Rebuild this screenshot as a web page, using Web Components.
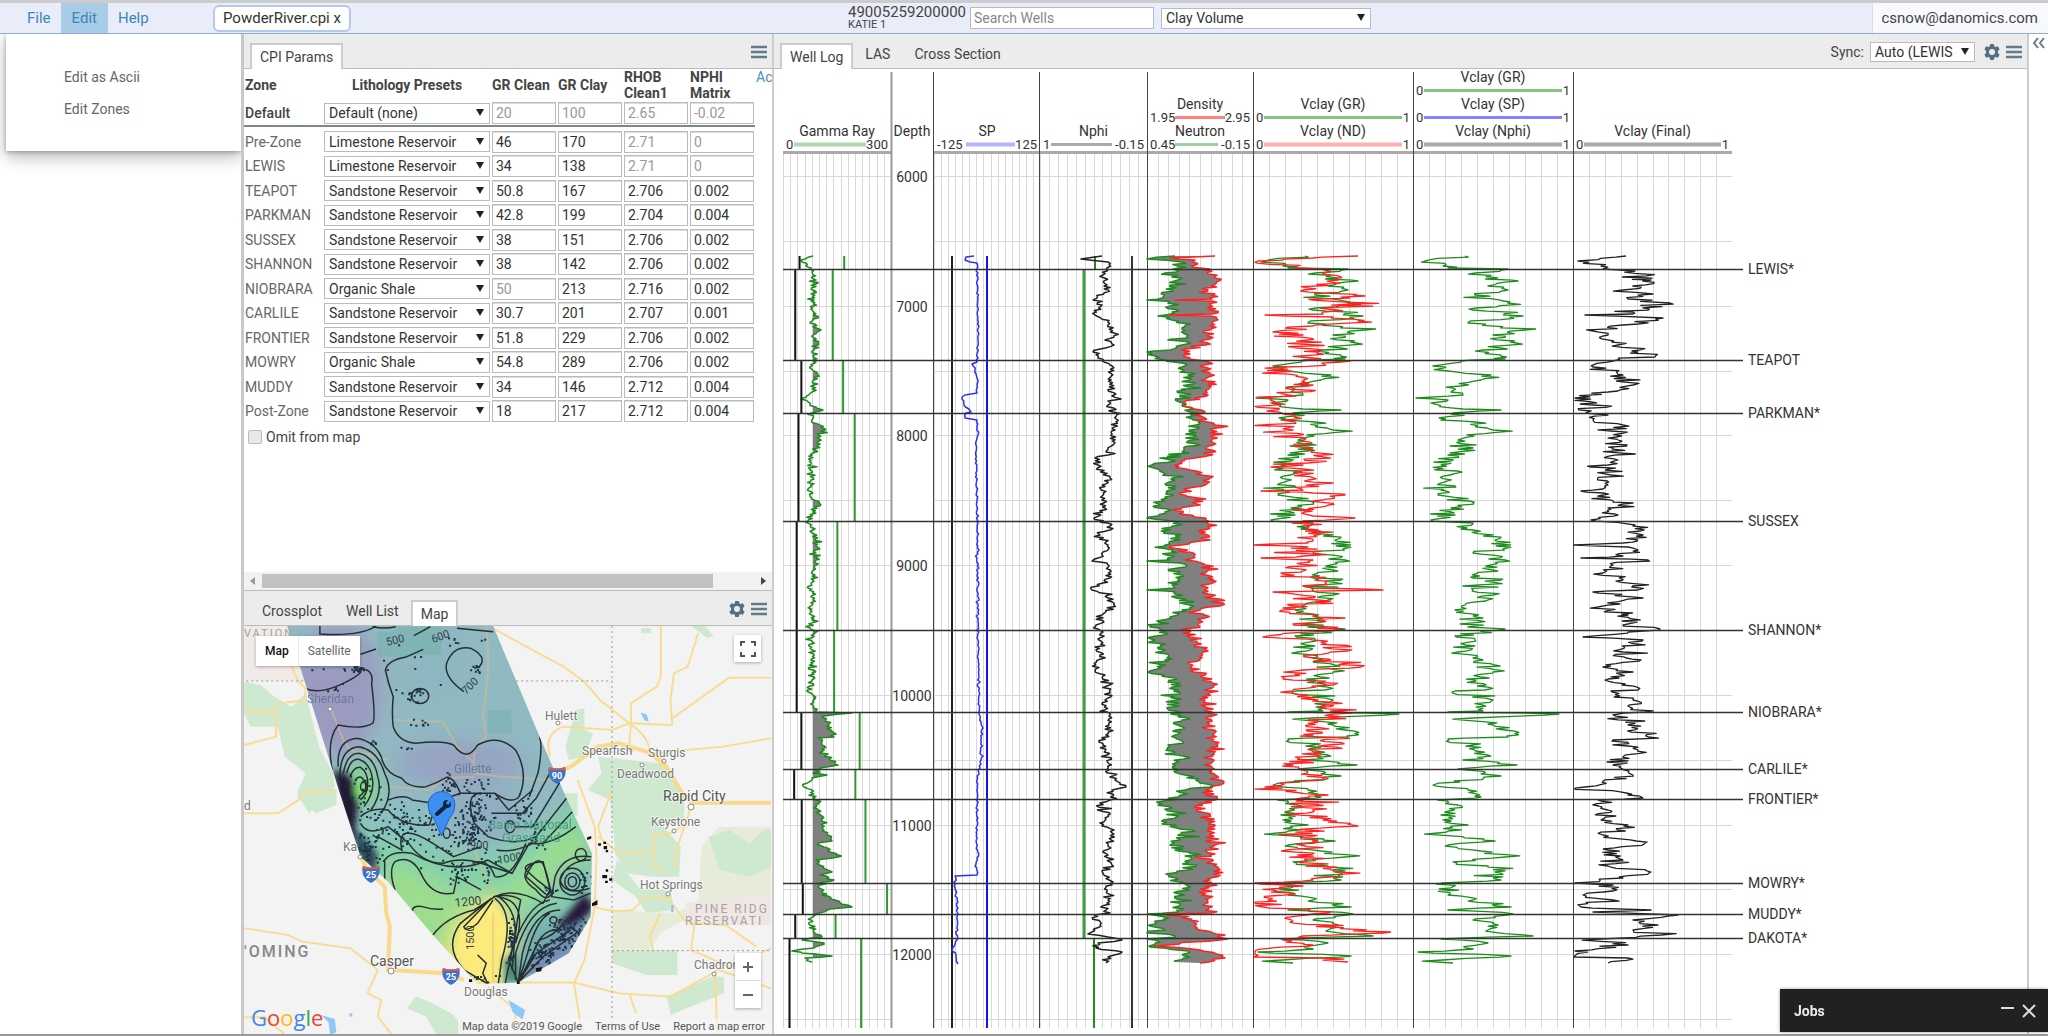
<!DOCTYPE html>
<html lang="en">
<head>
<meta charset="utf-8">
<title>PowderRiver.cpi</title>
<style>
html, body { margin: 0; height: 100%; }
body { font: 14px/16px Roboto, "Liberation Sans", sans-serif; color: #444; background: #fff; overflow: hidden; }
</style>
</head>
<body>
<cpi-app></cpi-app>
<script>
function define(name, html, setup) {
  const template = document.createElement('template');
  template.innerHTML = html;
  customElements.define(name, class extends HTMLElement {
    connectedCallback() {
      if (this.shadowRoot) return;
      this.attachShadow({ mode: 'open' }).append(template.content.cloneNode(true));
      if (setup) setup(this.shadowRoot, this);
    }
  });
}

/* ---------- small shared pieces ---------- */
define('drop-down', `
<style>
:host { display: block; position: relative; min-width: 0; }
:host::after { content: ""; position: absolute; right: 6px; top: 50%; margin-top: -4px; border: 4px solid transparent; border-top: 7px solid #222; border-bottom: 0; pointer-events: none; }
select { appearance: none; display: block; width: 100%; height: var(--h, 21px); box-sizing: border-box; margin: 0; border: 1px solid #bbb; border-radius: 0; background: #fff; color: #333; font: inherit; padding: 0 16px 0 4px; overflow: hidden; }
</style><select><option></option></select>`, (root, el) => {
  root.querySelector('option').textContent = el.getAttribute('value');
  root.querySelector('select').setAttribute('aria-label', el.getAttribute('label'));
});

define('icon-button', `
<style>
:host { display: block; }
button { display: block; border: 0; padding: 0; background: none; }
svg { display: block; }
</style><button><svg width="18" height="18" viewBox="0 0 18 18"></svg></button>`, (root, el) => {
  const shapes = {
    menu: '<path d="M1 4h16M1 9h16M1 14h16" stroke="#647c8a" stroke-width="2.500"/>',
    gear: '<path fill="#566f80" fill-rule="evenodd" d="M7.2 1h3.6l.5 2.3 1.3.7 2.2-.8 1.8 3.1-1.7 1.6v2.2l1.7 1.6-1.8 3.1-2.2-.8-1.3.7-.5 2.3H7.200l-.5-2.300-1.300-.700-2.200.800-1.800-3.100 1.700-1.600V7.900L1.400 6.300l1.800-3.100 2.200.8 1.300-.7zM9 6a3 3 0 1 0 0 6a3 3 0 1 0 0-6z"/>',
    collapse: '<path fill="none" stroke="#647c8a" stroke-width="2" d="M8 4L4 9l4 5M14 4l-4 5 4 5"/>'
  };
  root.querySelector('svg').innerHTML = shapes[el.getAttribute('icon')];
  root.querySelector('button').setAttribute('aria-label', el.getAttribute('icon'));
});

define('tab-strip', `
<style>
:host { display: flex; align-items: flex-end; box-sizing: border-box; height: 35px; padding: 0 4px 0 6px; background: #ececec; border-bottom: 1px solid #bbb; flex: none; }
nav { display: flex; flex: 1; align-items: flex-end; height: 100%; }
button { font: inherit; color: #444; background: none; border: 0; height: 28px; padding: 0 12px; margin: 0; white-space: nowrap; }
button[aria-selected=true] { background: #fff; border: 2px solid #ccc; border-bottom: 0; height: 26px; padding: 0 8px; margin-bottom: -1px; }
div { display: flex; align-items: center; height: 32px; gap: 4px; }
:host([tools-low]) div { height: 32px; }
</style><nav role="tablist"></nav><div><slot></slot></div>`, (root, el) => {
  el.getAttribute('tabs').split('|').forEach(name => {
    const b = document.createElement('button');
    b.textContent = name;
    b.setAttribute('role', 'tab');
    b.setAttribute('aria-selected', name === el.getAttribute('active'));
    root.querySelector('nav').append(b);
  });
});

/* ---------- top bar ---------- */
define('app-header', `
<style>
:host { display: flex; align-items: center; box-sizing: border-box; height: 34px; flex: none; border-top: 3px solid #ccc; border-bottom: 1px solid #8dabe0; background: #e9edf9; }
.left { flex: 0 0 848px; display: flex; align-items: center; height: 100%; }
nav { display: flex; height: 100%; padding-left: 17px; width: 196px; box-sizing: border-box; }
nav button { font: inherit; font-size: 15px; color: #3a87b7; border: 0; background: none; padding: 0 10px; height: 100%; }
nav button.on { background: #a8cbe6; padding: 0 11px; }
.file { font: inherit; font-size: 15px; color: #333; background: #fff; border: 2px solid #b5c9ef; border-radius: 6px; height: 27px; padding: 0 8px; margin-left: 17px; white-space: nowrap; }
.well { width: 122px; line-height: 14px; }
.well b { display: block; font-weight: 400; font-size: 15px; }
.well span { font-size: 11px; line-height: 12px; display: block; }
input { width: 184px; height: 22px; box-sizing: border-box; border: 1px solid #bbb; font: inherit; padding: 0 3px; }
input::placeholder { color: #888; opacity: 1; }
drop-down { width: 210px; margin-left: 7px; }
a { margin-left: auto; background: #f7f9fd; border-left: 1px solid #ddd; height: 100%; padding: 0 10px 0 8px; line-height: 30px; color: #444; text-decoration: none; font-size: 15px; }
</style>
<div class="left"><nav><button>File</button><button class="on">Edit</button><button>Help</button></nav><button class="file">PowderRiver.cpi x</button></div>
<div class="well"><b>49005259200000</b><span>KATIE 1</span></div>
<input placeholder="Search Wells" aria-label="Search Wells">
<drop-down value="Clay Volume" label="Module"></drop-down>
<a href="#account">csnow@danomics.com</a>`);

define('side-menu', `
<style>
:host { display: block; flex: 0 0 244px; box-sizing: border-box; border-right: 3px solid #c8c8c8; background: #fff; position: relative; }
ul { position: absolute; left: 6px; right: 0; top: 0; margin: 0; padding: 27px 0 26px; list-style: none; background: #fff; box-shadow: 0 6px 16px rgba(0,0,0,.28), 0 1px 4px rgba(0,0,0,.3); clip-path: inset(0 0 -30px -10px); }
a { display: block; padding: 8px 58px; color: #666; text-decoration: none; }
</style>
<ul><li><a href="#ascii">Edit as Ascii</a></li><li><a href="#zones">Edit Zones</a></li></ul>`);

/* ---------- parameters ---------- */
define('cpi-params', `
<style>
:host { display: flex; flex-direction: column; flex: 1; min-height: 0; overflow: hidden; background: #fff; }
.body { flex: 1; min-height: 0; overflow: hidden; }
table { border-collapse: collapse; table-layout: fixed; width: 575px; }
th, td { padding: 0 1px; text-align: left; font-weight: 400; white-space: nowrap; }
th { font-weight: 700; }
th:nth-child(1) { width: 77px; } th:nth-child(2) { width: 166px; } .n { width: 64px; }
thead tr { height: 32px; }
thead th:nth-child(2) { text-align: center; }
thead th:nth-child(5), thead th:nth-child(6) { white-space: normal; }
.more { vertical-align: top; font-weight: 400; }
.more a { color: #4a90c0; text-decoration: none; display: block; }
tbody th { font-weight: 400; color: #666; }
tbody tr:nth-child(odd) { height: 25px; } tbody tr:nth-child(even) { height: 24px; }
tbody.def th { color: #444; font-weight: 500; }
tbody.def tr { height: 24px; }
tr.rule, tbody.def tr.rule { height: 4px; line-height: 2px; }
tr.rule td { padding: 0; } tr.rule hr { border: 0; border-top: 2px solid #7c888c; margin: 0 0 2px; }
input.v { display: block; width: 100%; height: 22px; box-sizing: border-box; border: 1px solid #bbb; box-shadow: inset 0 1px #ddd; font: inherit; color: #333; padding: 0 3px; margin: 0; }
input.v.dim { color: #999; }
label { display: flex; align-items: center; gap: 4px; padding: 6px 4px; }
label input { margin: 0; width: 14px; height: 14px; appearance: none; border: 1px solid #bbb; border-radius: 2px; background: #e8e8e8; }
.bar { display: flex; align-items: center; justify-content: space-between; height: 18px; background: #f1f1f1; padding: 0 6px; flex: none; }
.bar i { border: 4px solid transparent; border-right: 5px solid #999; border-left: 0; }
.bar i:last-child { border: 4px solid transparent; border-left: 5px solid #444; border-right: 0; }
.bar span { height: 14px; background: #c1c1c1; flex: 1; margin: 0 48px 0 7px; }
</style>
<tab-strip tabs="CPI Params" active="CPI Params"><icon-button icon="menu"></icon-button></tab-strip>
<div class="body"><table>
<thead><tr><th>Zone</th><th>Lithology Presets</th><th class="n">GR Clean</th><th class="n">GR Clay</th><th class="n">RHOB Clean1</th><th class="n">NPHI Matrix</th><th class="more"><a href="#add">Ac</a></th></tr></thead>
<tbody class="def"></tbody><tbody class="zones"></tbody></table>
<label><input type="checkbox">Omit from map</label></div>
<div class="bar"><i></i><span></span><i></i></div>`, root => {
  const L = 'Limestone Reservoir', S = 'Sandstone Reservoir', O = 'Organic Shale';
  const row = ([zone, preset, ...values]) => `<tr><th scope="row">${zone}</th><td><drop-down value="${preset}" label="${zone} preset"></drop-down></td>` +
    values.map(v => `<td><input class="v${v[0] === '~' ? ' dim' : ''}" aria-label="${zone}" value="${v.replace('~', '')}"></td>`).join('') + '</tr>';
  root.querySelector('.def').innerHTML = row(['Default', 'Default (none)', '~20', '~100', '~2.65', '~-0.02']) + '<tr class="rule"><td colspan="6"><hr></td></tr>';
  root.querySelector('.zones').innerHTML = [
    ['Pre-Zone', L, '46', '170', '~2.71', '~0'], ['LEWIS', L, '34', '138', '~2.71', '~0'],
    ['TEAPOT', S, '50.8', '167', '2.706', '0.002'], ['PARKMAN', S, '42.8', '199', '2.704', '0.004'],
    ['SUSSEX', S, '38', '151', '2.706', '0.002'], ['SHANNON', S, '38', '142', '2.706', '0.002'],
    ['NIOBRARA', O, '~50', '213', '2.716', '0.002'], ['CARLILE', S, '30.7', '201', '2.707', '0.001'],
    ['FRONTIER', S, '51.8', '229', '2.706', '0.002'], ['MOWRY', O, '54.8', '289', '2.706', '0.002'],
    ['MUDDY', S, '34', '146', '2.712', '0.004'], ['Post-Zone', S, '18', '217', '2.712', '0.004']
  ].map(row).join('');
});

/* deterministic noise, so the drawing is stable between loads */
function noise(seed) {
  return () => { seed = (seed * 1664525 + 1013904223) >>> 0; return seed / 4294967296 * 2 - 1; };
}

/* ---------- map ---------- */
define('area-map', `
<style>
:host { display: block; position: relative; flex: 1; min-height: 0; overflow: hidden; background: #f3f3f3; }
.map { display: block; position: absolute; left: 0; top: 0; }
.box { position: absolute; background: #fff; box-shadow: 0 1px 3px rgba(0,0,0,.3); display: flex; }
.box button { border: 0; background: none; font: inherit; font-size: 12px; color: #666; padding: 0 8px; }
.types { left: 12px; top: 10px; height: 30px; } .types button:first-child { color: #111; font-weight: 500; border-right: 1px solid #e6e6e6; } .types button { padding: 0 9px; }
.full { right: 11px; top: 9px; width: 27px; height: 27px; }
.zoom { right: 11px; bottom: 26px; width: 26px; height: 55px; flex-direction: column; }
.zoom button, .full button { flex: 1; padding: 0; display: grid; place-items: center; }
.zoom button:first-child { border-bottom: 1px solid #ddd; }
footer { position: absolute; right: 0; bottom: 0; display: flex; gap: 13px; padding: 0 7px 0 4px; font-size: 11px; line-height: 15px; background: rgba(245,245,245,.75); color: #555; }
footer a { color: #555; text-decoration: none; }
.logo { position: absolute; left: 7px; bottom: 4px; font: 500 22px/26px "Open Sans", sans-serif; }
</style>
<svg class="map" width="527" height="409" viewBox="244 626 527 409">
<defs>
<clipPath id="field"><path d="M137 198H735L870 530L948 715L1022 880L1018 1070L955 1180L808 1268L690 1272L560 1125L430 965L350 890L290 700Z"/></clipPath>
<filter id="b" x="-50%" y="-50%" width="200%" height="200%"><feGaussianBlur stdDeviation="30"/></filter>
<filter id="s" x="-50%" y="-50%" width="200%" height="200%"><feGaussianBlur stdDeviation="10"/></filter>
</defs>
<g transform="translate(240 560) scale(.3444 .3333)" fill="none" id="g">
<g fill="#cfe8d0">
<path d="M12 365L60 375L100 410L150 440L190 400L230 560L270 640L275 680L200 760L165 700L190 640L130 590L110 500L30 500L12 460Z"/>
<path d="M975 450L1000 445L1000 510L1025 520L1000 590L955 600L945 560Z"/><path d="M1165 205h28v15h-28zM1310 198h40l25 30-20 5z"/>
<path d="M1040 590L1220 610L1290 700L1290 780L1230 800L1280 860L1275 950L1200 950L1120 940L1090 880L1075 720L1010 690L1050 640Z"/><path d="M1095 900L1160 985L1250 990L1260 1050L1180 1060L1150 1010L1080 960Z"/>
<path d="M165 710L280 690V735L220 760Z"/><path d="M1080 1170H1270V1245H1180L1080 1210Z"/><path d="M1240 1310L1370 1250L1405 1250V1300L1250 1365Z"/>
<path d="M510 1310L560 1330L620 1365L660 1423H570L540 1370L485 1345Z"/><path d="M940 700h40v70l-40-20z"/></g>
<path fill="#e7ecd8" d="M1080 1050L1260 1060L1330 1030L1340 860L1390 800H1542V1050L1280 1085L1220 1120L1190 1172H1080Z"/>
<path fill="#f0e6e4" d="M1290 1030L1542 1000V1095H1310Z"/><path fill="#f1ebe8" d="M12 198H137L190 363H12Z"/>
<path fill="#cfe8d0" d="M1360 830l60-20 60 40 40-40h22v110l-60 30-90-20z"/>
<g stroke="#f9dc94" stroke-width="2">
<path d="M735 205L840 265L940 320L1000 365L1045 420L1130 490L1255 495L1250 420L1260 340L1300 320L1330 220"/>
<path d="M1222 198V350L1210 380L1135 430V490L1130 560M1255 475L1420 353H1542"/><path d="M900 590Q880 520 940 500L1080 510L1130 490Q1190 530 1190 580L1250 640L1290 710L1310 730H1542M1190 580L1400 560L1542 535"/>
<path d="M150 315Q160 360 190 385L190 420L120 430L90 460L30 455L12 440M105 455V530L12 555M275 500L260 470M280 540L310 610M12 760H110L170 720L180 700L280 690"/>
<path d="M1040 830L1100 880L1200 875V830L1250 820L1280 800M1200 880L1205 920L1240 940M1310 740L1270 860L1260 920M1030 800L1035 890L1030 1040L1000 1200L970 1270L990 1400L1000 1423M1030 1040Q1080 1060 1140 1050L1180 1010H1240L1290 1080L1320 1090L1310 1170L1420 1220L1542 1165M1310 1090L1410 1095L1500 1160M1220 1060L1190 1130L1200 1170M980 660L1030 800M1080 690L1040 800L1050 840"/>
<path d="M12 1105L140 1125L180 1145L320 1165L400 1230L370 1300L410 1320L400 1370L440 1423M12 1372H70L130 1423"/><path d="M808 1268H970L1100 1300L1250 1310L1390 1230L1542 1285M1380 1230L1385 1423M1130 1300L1150 1360M720 1280L800 1350V1423"/></g>
<path d="M1290 710L1250 640L1225 600L1180 575L1100 550L1040 560L1000 590L960 620L870 655M1310 728H1542M350 890L370 930L420 980L425 1060L435 1100L430 1230L600 1240L650 1260" stroke="#f9d98a" stroke-width="4"/>
<path d="M18 363H1080M1080 198V1423M1080 1172H1542" stroke="#999" stroke-dasharray="2 3"/>
<g fill="#8ec8f4"><path d="M1163 458l18 5 6 22-12-4zM780 1320l48 30-8 28-28-20zM235 1365l40 12 5 40-18 8-5-38zM318 1360h8v10h-8zM1252 1035h7v22h-7z"/></g>
<g clip-path="url(#field)" id="surface">
<rect x="100" y="190" width="950" height="1100" fill="#8cb6bf"/>
<g filter="url(#b)">
<ellipse cx="280" cy="390" rx="130" ry="200" fill="#9695bd"/><ellipse cx="640" cy="610" rx="190" ry="70" fill="#929fc0"/><ellipse cx="560" cy="300" rx="110" ry="130" fill="#87b4bd"/>
<path d="M280 780L560 860L700 880L850 830L1040 640V1060L800 1300L600 1300L330 950Z" fill="#7fcea6"/><ellipse cx="480" cy="790" rx="140" ry="50" fill="#84bdbd"/><ellipse cx="700" cy="760" rx="120" ry="70" fill="#8ba8bf"/>
<path d="M430 900L650 1000L760 1000L900 840L1000 790L1010 900L890 1000L790 1050L740 1290H600L420 1000Z" fill="#97dc88"/>
<path d="M730 1010L800 1100L750 1290H670L600 1180L630 1090Z" fill="#fdea70"/><ellipse cx="350" cy="680" rx="55" ry="65" fill="#80d584"/>
<path d="M820 1100L1020 1030V1180L800 1290Z" fill="#6da4aa"/><ellipse cx="965" cy="960" rx="40" ry="40" fill="#75a7ba"/></g>
<g filter="url(#s)"><path d="M730 1010L785 1100L745 1280H690L630 1180L640 1100Z" fill="#fcea74"/><path d="M270 630L310 640L345 690L340 760L330 850L290 760Z" fill="#160c28"/><path d="M330 800L400 880L390 950L340 880Z" fill="#243b50"/>
<path d="M1000 1000L1030 1040L960 1120L920 1100Z" fill="#1e1030"/><ellipse cx="355" cy="690" rx="22" ry="30" fill="#7be070"/><path d="M955 1100L1010 1080L950 1180L850 1250L820 1230Z" fill="#6f86b0"/><path d="M760 1200L800 1180L820 1260L770 1270Z" fill="#3f8573"/></g>
<path d="M400 215h110v75h-110zM450 200h135v85h-135zM720 450h68v70h-68z" fill="#5aa894" opacity=".3"/>
<path d="M715 198Q730 330 705 460L715 530L680 570V640L760 650L900 660M265 450L300 540L320 570L430 600M440 480L590 485L630 560L680 610M430 680L550 690L600 655L680 650M735 1000L700 920L670 840M735 1270V1060" stroke="#d9bd7c" stroke-width="2" opacity=".5"/>
<g stroke="#1b2429" stroke-width="1.5" id="contours">
<path d="M232 198V222Q350 230 395 198M385 200Q420 208 452 200M505 227L553 200M630 205L735 215M190 385Q230 405 300 370T345 325M350 283L395 267M350 325Q390 330 382 370Q395 480 385 490Q350 510 285 495Q250 540 268 630M532 268L480 292Q430 300 422 330Q430 370 445 410Q440 460 445 500Q460 545 510 550Q590 540 620 555Q660 610 690 555Q750 520 800 570Q840 640 810 710Q790 735 740 700L640 700Q620 650 600 652Q570 670 540 680Q490 685 470 655Q420 640 410 590Q390 545 340 535Q280 540 285 620"/>
<path d="M650 395Q590 350 600 310Q620 255 670 265Q720 290 695 320L680 325M498 408a22 20 0 1 0 50 0a22 20 0 1 0 -50 0M510 400l20-15M870 530Q880 560 865 640L840 710M905 630L860 715L820 760L730 760M948 715L860 830Q800 860 720 830L680 790Q650 700 700 700M930 665L850 800L800 800M965 755L880 850M975 800Q900 860 840 850L790 940L700 910Q640 890 590 910Q530 910 490 850L430 800Q370 830 350 790"/>
<path d="M290 650Q290 565 345 560Q400 570 420 640Q450 700 410 760M300 640Q310 580 345 580Q390 590 400 650Q415 700 380 750M310 640Q320 595 345 598Q380 610 385 660Q390 700 360 740M320 650Q330 620 350 622Q375 640 370 680Q370 700 350 720M335 660Q350 640 362 665T345 710M350 680a10 14 0 1 0 20 0a10 14 0 1 0 -20 0"/>
<path d="M420 960V900Q440 870 500 880Q620 950 720 900L790 940M450 990Q430 930 450 905Q500 880 530 950Q560 1010 620 1000L630 950L700 990M500 1055Q500 1035 530 1040Q560 1050 590 1047M560 1125Q600 1070 680 1050L740 1010Q800 980 880 1030L900 990Q860 960 830 930Q820 910 880 905Q890 950 905 1000Q890 1030 860 990Q800 950 850 910"/>
<path d="M675 910Q720 890 740 950Q790 960 830 850M730 1015L640 1090Q590 1160 650 1230L720 1272M730 1015L650 1100Q655 1120 690 1090L735 1020M740 1015Q800 1060 760 1200L750 1270M750 1010Q820 1060 790 1170L770 1270M735 1010Q790 1000 815 1020Q800 1100 790 1230M690 1185L715 1210L705 1240L720 1272M745 1010Q840 1020 800 1150"/>
<path d="M808 1268L780 1200Q830 1030 900 1020M800 1260L800 1180Q840 1040 920 1030M808 1268L820 1180Q850 1050 930 1050M808 1268L835 1180Q860 1080 900 1060M808 1268L845 1200Q870 1100 930 1110M808 1268L860 1180L960 1110M808 1268L880 1190L990 1110M808 1268L870 1140Q910 1130 940 1090"/>
<path d="M1000 870a16 18 0 1 1 -24 5a16 18 0 0 1 24 -5M1020 890Q940 880 915 950L905 1010L970 1020L1018 1000M1018 900Q950 900 930 960Q940 1010 1015 985M965 965m-36 0a36 40 0 1 0 72 0a36 40 0 1 0-72 0M943 965a22 26 0 1 0 44 0a22 26 0 1 0-44 0M953 965a12 15 0 1 0 24 0a12 15 0 1 0-24 0M830 950Q870 860 890 940T885 1000ZM770 800a14 18 0 1 0 28 0a14 18 0 1 0-28 0M590 820a10 15 0 1 0 20 0a10 15 0 1 0-20 0M900 1080a10 10 0 1 0 20 0a10 10 0 1 0-20 0"/>
<path d="M430 720Q480 700 500 720L560 730L640 700M350 770Q380 740 430 750Q470 800 550 795L570 730M400 830L470 870Q450 780 560 850L620 890L700 860M740 700L780 750L850 690M745 870Q790 880 850 850"/></g>
<g id="dots" fill="#102a3a"></g></g>
<g fill="#111"><path d="M1008 832l12-4v8l-12 4zM1040 850h8v7h-8zM1055 845h8v7h-8zM1056 858h10v10h-10zM1062 870h7v7h-7zM1062 928h7v7h-7zM1052 945h14v10h-14zM1072 955h9v7h-9zM1060 962h8v7h-8zM1022 1030l16-10v14l-16 5zM860 1225l18-5-4 14-14 2zM665 1258h9v8h-9zM804 1264h8v8h-8z"/></g>
</g>
<g id="labels" font-size="12" fill="#777" stroke="#fff" stroke-width="2" stroke-opacity=".6" paint-order="stroke" stroke-linejoin="round">
<text x="545" y="720">Hulett</text><text x="582" y="755">Spearfish</text><text x="648" y="757">Sturgis</text><text x="617" y="778">Deadwood</text>
<text x="663" y="801" font-size="14" fill="#555">Rapid City</text><text x="651" y="826">Keystone</text><text x="640" y="889">Hot Springs</text><text x="694" y="969">Chadron</text>
<text x="370" y="966" font-size="14" fill="#555">Casper</text><text x="464" y="996">Douglas</text><text x="343" y="851">Ka</text><text x="244" y="810">d</text>
</g>
<g font-size="12" fill="#5d7797" opacity=".85"><text x="307" y="703">Sheridan</text><text x="454" y="773">Gillette</text><g fill="#3a9a76"><text x="488" y="829" font-size="13">Basin National</text><text x="502" y="842" font-size="13">Grassland</text></g></g>
<g fill="#a3a3a3"><text x="244" y="957" font-size="16" letter-spacing="2" font-weight="500" fill="#888">'OMING</text><g font-size="12" letter-spacing="2"><text x="695" y="913">PINE RIDG</text><text x="685" y="925">RESERVATI</text></g><text x="244" y="637" font-size="11" letter-spacing="2">VATION</text></g>
<g font-size="11" fill="#34434a"><text transform="translate(387 646) rotate(-14)">500</text><text transform="translate(433 643) rotate(-20)">600</text><text transform="translate(466 695) rotate(-45)">700</text><text x="470" y="849">900</text><text transform="translate(498 864) rotate(-10)">1000</text><text transform="translate(455 907) rotate(-6)" font-size="12">1200</text><text transform="translate(474 950) rotate(-90)">1500</text></g>
<g fill="#fff" stroke="#888"><circle cx="558" cy="723" r="2"/><circle cx="631" cy="751" r="1"/><circle cx="664" cy="761" r="2"/><circle cx="642" cy="765" r="2"/><circle cx="691" cy="807" r="3"/><circle cx="674" cy="831" r="2"/><circle cx="668" cy="894" r="2"/><circle cx="714" cy="974" r="2"/><circle cx="391" cy="971" r="3"/><circle cx="330" cy="709" r="2"/><circle cx="360" cy="857" r="2"/></g>
<g font-size="9" font-weight="700" fill="#fff" text-anchor="middle" id="shields"></g>
<path d="M441.500 836L434 819Q428 813 428 805A13.500 13.500 0 0 1 455 805Q455 813 449 819Z" fill="#3c8ef0" stroke="#2466c0"/>
<path d="M437 814L446 806" stroke="#10233c" stroke-width="4" stroke-linecap="round"/><circle cx="447" cy="804" r="4" fill="#10233c"/><path d="M447 804l4-5" stroke="#3c8ef0" stroke-width="3"/>
</svg>
<div class="box types"><button>Map</button><button>Satellite</button></div>
<div class="box full"><button aria-label="Full screen"><svg width="16" height="16"><path d="M1 5V1h4M11 1h4v4M15 11v4h-4M5 15H1v-4" fill="none" stroke="#555" stroke-width="2"/></svg></button></div>
<div class="box zoom"><button aria-label="Zoom in"><svg width="12" height="12"><path d="M1 6h10M6 1v10" stroke="#666" stroke-width="2"/></svg></button><button aria-label="Zoom out"><svg width="12" height="12"><path d="M1 6h10" stroke="#666" stroke-width="2"/></svg></button></div>
<div class="logo"><span style="color:#4285f4">G</span><span style="color:#ea4335">o</span><span style="color:#fbbc05">o</span><span style="color:#4285f4">g</span><span style="color:#34a853">l</span><span style="color:#ea4335">e</span></div>
<footer><span>Map data ©2019 Google</span><a href="#terms">Terms of Use</a><a href="#report">Report a map error</a></footer>`, root => {
  root.querySelectorAll('#g path').forEach(p => { if (!p.closest('clipPath')) p.setAttribute('vector-effect', 'non-scaling-stroke'); });
  root.querySelector('#surface').setAttribute('opacity', '.95');
  /* well clusters: x, y, spread x, spread y, count */
  const clusters = [[340,325,18,10,22],[280,385,12,8,4],[505,400,30,25,16],[620,240,20,15,6],[685,325,15,15,8],[510,490,35,15,8],[480,565,20,15,4],[700,240,10,10,2],[500,310,120,80,8],[390,545,14,8,6],[350,700,60,80,30],[370,870,40,50,50],
    [680,760,60,100,100],[660,830,40,40,36],[610,670,30,30,18],[500,780,70,40,34],[470,830,60,40,22],[630,940,30,30,24],[820,750,40,50,22],[960,1120,55,60,110],[880,1185,40,35,60],[785,1140,12,60,40],[710,930,50,50,16],[860,830,20,40,18],[700,1250,50,18,12],[590,870,80,60,20],[1000,960,18,30,14],[900,990,25,15,8],[410,770,60,60,24],[250,350,50,60,6]];
  const rnd = noise(7);
  let d = '';
  for (const [x, y, sx, sy, n] of clusters)
    for (let i = 0; i < n; i++) d += `M${(x + sx * (rnd() + rnd()) / 1.6).toFixed(0)} ${(y + sy * (rnd() + rnd()) / 1.6).toFixed(0)}h6v6h-6z`;
  root.querySelector('#dots').innerHTML = `<path d="${d}"/>`;
  root.querySelector('#shields').innerHTML = [[371, 873, 25], [451, 975, 25], [557, 774, 90]].map(([x, y, t]) =>
    `<path d="M${x - 8} ${y - 7}q8 3 16 0q3 11-8 17q-11-6-8-17z" fill="#3f73c4"/><path d="M${x - 8} ${y - 7}q8 3 16 0l1 3h-18z" fill="#e0574f"/><text x="${x}" y="${y + 5}">${t}</text>`).join('');
});

/* ---------- well log ---------- */
const CURVES = {
  gr: '256:813 259:805 262:802 268:811 272:812 280:816 290:813 300:814 310:812 318:818 323:810 330:821 335:813 345:818 355:814 362:816 368:810 375:818 385:814 392:812 398:803 403:810 410:823 413:812 420:812 430:825 435:818 445:818 455:812 470:810 480:811 495:810 503:819 512:813 521:808 530:813 545:816 560:816 575:815 580:813 600:813 610:810 620:812 630:812 638:811 650:812 660:811 680:812 692:808 700:814 712:815 713:852 716:824 725:829 737:834 738:818 745:822 755:826 765:838 768:820 773:813 775:827 778:812 786:803 790:812 800:816 810:818 820:822 830:824 841:832 843:818 857:838 860:816 872:832 875:820 880:834 885:820 895:822 900:835 907:852 909:830 914:816 920:811 930:813 937:822 940:802 943:824 948:814 951:792 953:802 956:832 958:805 962:812',
  sp: '256:974 257:966 260:965 262:970 263:977 300:978 340:978 362:977 364:972 370:975 380:978 393:977 395:965 397:962 405:964 412:971 413:966 418:965 420:977 435:978 445:976 500:977 640:978 712:979 726:982 760:981 780:977 875:977 876:955 900:957 940:957 951:952 955:956 964:958',
  nphi: '256:1102 259:1081 262:1108 268:1107 275:1103 290:1108 300:1093 305:1102 315:1095 325:1108 333:1114 340:1105 345:1114 352:1093 358:1098 365:1110 380:1111 396:1112 399:1121 401:1108 412:1113 430:1115 445:1113 455:1108 458:1095 465:1098 478:1110 490:1101 500:1102 508:1105 518:1094 523:1108 530:1110 535:1100 545:1108 555:1102 561:1092 563:1107 578:1110 583:1103 590:1092 595:1108 605:1114 615:1102 625:1096 632:1103 640:1099 655:1100 671:1095 675:1105 690:1110 700:1105 712:1107 725:1109 735:1106 745:1103 755:1107 770:1109 780:1115 787:1126 790:1112 800:1110 803:1100 815:1108 823:1100 830:1114 845:1108 855:1108 865:1112 873:1103 882:1113 890:1107 900:1108 910:1106 913:1110 915:1094 925:1100 932:1092 934:1088 937:1108 940:1122 943:1098 948:1096 952:1122 957:1108 963:1106',
  neu: '256:1175 259:1147 262:1182 268:1178 273:1165 280:1178 290:1172 298:1162 300:1147 302:1170 312:1172 316:1158 320:1172 328:1182 335:1188 338:1188 340:1168 342:1188 345:1182 350:1170 352:1147 356:1155 360:1165 363:1182 375:1188 390:1185 405:1182 412:1190 425:1196 440:1192 455:1180 457:1180 458:1160 461:1175 465:1152 470:1160 480:1175 490:1170 497:1165 505:1160 512:1165 518:1147 522:1178 532:1165 540:1180 546:1166 558:1168 560:1170 561:1147 563:1180 575:1182 585:1172 588:1175 590:1147 592:1175 594:1175 605:1190 610:1182 617:1170 627:1150 631:1165 640:1155 650:1165 660:1165 671:1150 678:1175 690:1178 705:1172 720:1182 730:1176 742:1183 745:1168 755:1178 770:1178 783:1200 787:1210 790:1185 797:1178 804:1162 812:1175 824:1162 830:1192 840:1180 850:1175 852:1188 860:1190 870:1188 874:1166 882:1180 886:1188 898:1175 905:1180 912:1178 914:1147 920:1165 926:1150 930:1165 933:1147 936:1175 939:1147 942:1160 947:1150 952:1190 957:1190 962:1175',
  den: '256:1215 258:1170 260:1195 265:1195 270:1205 278:1215 290:1208 299:1212 300:1175 301:1212 314:1212 315:1170 316:1210 322:1213 335:1208 345:1205 350:1182 358:1190 361:1205 370:1208 385:1208 395:1208 398:1195 405:1185 412:1205 415:1195 418:1205 425:1215 440:1212 455:1212 458:1195 465:1175 470:1190 478:1210 485:1205 490:1185 500:1195 505:1200 510:1172 517:1195 520:1205 528:1210 533:1200 540:1210 546:1170 555:1195 560:1185 565:1205 580:1210 590:1205 606:1220 610:1200 618:1205 625:1198 632:1190 640:1190 651:1208 660:1200 668:1190 675:1205 683:1212 690:1205 700:1205 712:1212 725:1208 740:1212 755:1212 765:1205 775:1215 785:1220 790:1205 800:1215 806:1195 815:1210 825:1215 835:1210 845:1215 855:1210 857:1195 859:1210 870:1220 880:1210 890:1205 900:1208 913:1212 914:1165 920:1190 930:1200 935:1225 940:1220 946:1155 950:1200 958:1225 963:1200',
  vgr: '256:52 261:12 266:30 268:35 269:95 273:62 281:105 286:75 290:95 295:62 302:97 310:60 316:110 323:55 330:112 335:80 343:103 350:70 359:92 361:48 366:20 371:35 375:78 380:68 388:40 392:38 395:50 398:3 400:35 403:18 409:50 410:88 413:40 420:28 422:62 430:80 440:45 448:60 455:35 465:28 475:37 490:28 495:25 503:60 508:38 515:42 520:18 523:60 530:60 540:82 549:90 553:60 560:92 570:80 578:60 580:88 590:60 595:80 605:52 610:42 618:70 627:55 629:92 636:42 640:62 652:45 660:70 672:80 680:62 690:72 691:42 700:80 711:70 712:35 714:146 718:60 730:92 737:95 739:35 745:60 755:75 760:50 765:104 769:45 776:88 785:20 790:55 797:68 800:25 805:45 815:28 825:55 833:25 841:82 845:35 857:92 862:40 866:75 872:82 880:88 883:30 895:35 900:60 907:98 910:35 914:100 920:60 925:85 930:75 936:120 939:28 943:75 950:45 952:5 956:98 960:30 963:40',
  vnd: '256:105 258:60 261:5 266:40 268:45 272:75 280:85 290:50 295:100 296:112 300:60 304:100 312:70 314:70 315:12 317:80 321:105 326:60 332:20 335:50 340:55 348:45 352:65 360:50 362:88 367:30 372:25 380:50 385:60 395:35 403:20 411:14 415:40 420:30 430:40 440:50 450:60 457:70 463:55 465:50 467:18 469:50 480:55 483:80 490:50 491:8 493:60 495:92 500:70 505:75 510:40 516:60 518:102 521:50 530:65 540:60 543:55 545:1 547:55 556:50 558:8 560:60 573:28 578:65 588:60 590:130 592:20 600:65 608:30 616:60 618:92 624:40 629:88 637:10 640:60 651:95 658:60 667:108 670:50 679:30 685:80 691:40 700:65 712:90 720:55 735:60 745:75 755:65 765:40 772:55 780:70 787:12 795:75 800:50 812:60 820:70 826:105 830:55 840:65 855:45 865:60 872:85 880:60 883:2 886:50 890:20 893:40 900:15 907:10 912:78 914:60 921:40 933:130 936:50 940:30 945:60 952:2 957:1 958:70 962:95',
  vf: '256:53 261:5 266:28 269:30 271:62 280:78 290:50 294:80 299:55 303:97 312:60 314:60 315:12 318:90 325:50 331:20 335:35 345:45 352:65 357:82 361:40 367:20 375:50 385:60 392:35 398:2 405:20 412:15 415:35 420:20 425:50 440:45 448:40 460:45 465:35 467:18 469:35 475:38 485:35 489:30 491:8 493:30 495:30 503:60 508:35 515:45 520:18 525:62 535:70 543:50 545:1 547:55 550:65 556:50 558:8 560:75 565:40 573:30 580:50 590:65 592:20 598:70 607:25 615:55 625:50 629:87 632:55 637:10 640:70 652:50 660:68 667:30 672:60 679:35 690:65 691:38 700:60 712:72 715:40 725:55 737:75 740:40 750:65 765:40 775:60 787:12 795:55 798:70 800:25 810:35 820:28 825:55 835:30 843:72 850:35 860:50 866:35 872:78 878:50 883:2 885:40 892:30 895:10 900:40 907:8 910:78 912:20 915:105 920:60 925:85 930:60 935:88 939:28 945:55 951:2 957:1 958:55 963:35'
};
/* interpolates a curve and adds jitter; one sample in six is a longer kick */
function trace(key, amp, seed, step, left) {
  const pts = CURVES[key].split(' ').map(p => p.split(':').map(Number)), rnd = noise(seed), out = [];
  for (let i = 0; i < pts.length; i++) {
    const [y, x] = pts[i];
    out.push([y, x]);
    if (i + 1 < pts.length) {
      const [y2, x2] = pts[i + 1];
      for (let v = y + step; v < y2 - step / 2; v += step) {
        const kick = Math.abs(rnd()) < .16 ? 1.9 : 1;
        out.push([v, Math.max(left, x + (x2 - x) * (v - y) / (y2 - y) + rnd() * amp * kick)]);
      }
    }
  }
  return out;
}
const points = (t, dx) => t.map(([y, x]) => (x + dx).toFixed(1) + ' ' + y.toFixed(1)).join(' ');

define('well-log', `
<style>
:host { display: block; flex: 1; min-height: 0; overflow: hidden; background: #fff; }
svg { display: block; }
text { font-size: 14px; fill: #333; }
.m { text-anchor: middle; } .e { text-anchor: end; } .s { font-size: 13px; }
</style><svg width="1253" height="966" viewBox="774 69 1253 966"></svg>`, root => {
  const line = (x1, y1, x2, y2, c, w = 1) => `<path d="M${x1} ${y1}L${x2} ${y2}" stroke="${c}" stroke-width="${w}"/>`;
  const poly = (p, c, w = 1) => `<polyline points="${p}" fill="none" stroke="${c}" stroke-width="${w}" stroke-linejoin="round"/>`;
  const tracks = [[783, 891, 15], [934, 1040, 15], [1040, 1147, 12], [1147, 1253, 10], [1253, 1413, 10], [1413, 1573, 10], [1573, 1732, 10]];
  let s = '';
  for (const [a, b, n] of tracks) for (let i = 0; i < n; i++) { const x = Math.round(a + (b - a) * i / n) + .5; s += line(x, 152, x, 1028, '#d8d8d8'); }
  for (let i = 0; i < 14; i++) { const y = Math.round(176 + i * 64.85) + .5; s += line(783, y, 891, y, '#d8d8d8') + line(934, y, 1732, y, '#d8d8d8'); }
  s += line(783, 152.5, 891, 152.5, '#aaa', 3) + line(934, 152.5, 1732, 152.5, '#aaa', 3);
  s += line(891.5, 72, 891.5, 1028, '#999', 2);
  for (const x of [933, 1039, 1147, 1253, 1413, 1573]) s += line(x + .5, 72, x + .5, 1028, '#444', 1);

  const G = '#1d8c1d', zones = [[256, 46, 170], [269, 34, 138], [360, 51, 167], [413, 43, 199], [521, 38, 151], [630, 38, 142], [713, 51, 213], [769, 31, 201], [799, 52, 229], [883, 55, 289], [914, 34, 146], [939, 18, 217], [1028]];
  const gr = trace('gr', 3.5, 11, 1.3, 784);
  s += `<polygon fill="#808080" points="813 256 ${points(gr.map(([y, x]) => [y, Math.max(813, x)]), 0)} 813 963"/>` + poly(points(gr, 0), G, 1.5);
  for (let i = 0; i < 12; i++) { const [y, a, b] = zones[i], y2 = zones[i + 1][0]; s += line(783 + a * .36, y, 783 + a * .36, y2, '#111', 2) + line(783 + b * .36, y, 783 + b * .36, y2, '#2d9a2d', 2); }
  s += line(952, 256, 952, 1028, '#222', 2) + line(987, 256, 987, 1028, '#1414f0', 2) + poly(points(trace('sp', 1, 5, 2, 935), 0), '#3030f8', 1.5);
  s += line(1132, 256, 1132, 1028, '#333', 2) + line(1084, 269, 1084, 939, '#3c9e3c', 3) + line(1095, 256, 1095, 269, G, 2) + line(1094, 939, 1094, 1028, G, 2);
  s += poly(points(trace('nphi', 4, 23, 1.4, 1041), 0), '#222', 1.5);
  const neu = trace('neu', 8, 31, 1.3, 1148), den = trace('den', 7, 37, 1.3, 1148);
  s += `<polygon fill="#808080" points="${points(neu, 0)} ${points(den.slice().reverse(), 0)}"/>` + poly(points(neu, 0), G, 1.5) + poly(points(den, 0), '#f22', 1.5);
  const vgr = trace('vgr', 13, 41, 1.2, 2), vnd = trace('vnd', 18, 43, 1.1, 2), vf = trace('vf', 13, 47, 1.2, 2);
  s += poly(points(vgr, 1253), G, 1.3) + poly(points(vnd, 1253), '#f22', 1.3) + poly(points(vgr, 1413), G, 1.3) + poly(points(vf, 1573), '#222', 1.3);

  [['LEWIS*', 269], ['TEAPOT', 360], ['PARKMAN*', 413], ['SUSSEX', 521], ['SHANNON*', 630], ['NIOBRARA*', 712], ['CARLILE*', 769], ['FRONTIER*', 799], ['MOWRY*', 883], ['MUDDY*', 914], ['DAKOTA*', 938]]
    .forEach(([t, y]) => { s += line(783, y + .5, 1743, y + .5, '#333', 1.5) + `<text x="1748" y="${y + 5}">${t}</text>`; });
  for (let d = 6; d < 13; d++) s += `<text class="m" x="912" y="${Math.round(182 + (d - 6) * 129.7)}">${d}000</text>`;

  const head = (a, b, y, name, lo, hi, c, wide = 3) => {
    const w = t => t.length * 7 - (t.includes('.') ? 4 : 0);
    s += `<text class="m" x="${(a + b) / 2}" y="${y}">${name}</text><text class="s" x="${a + 3}" y="${y + 13}">${lo}</text><text class="s e" x="${b - 3}" y="${y + 13}">${hi}</text>` +
      line(a + 4 + w(lo), y + 8.5, b - 4 - w(hi), y + 8.5, c, wide);
  };
  head(783, 891, 136, 'Gamma Ray', '0', '300', '#b0d8b0', 4);
  s += '<text class="m" x="912" y="136">Depth</text>';
  head(934, 1040, 136, 'SP', '-125', '125', '#b4b4ff', 4);
  head(1040, 1147, 136, 'Nphi', '1', '-0.15', '#aaa');
  head(1147, 1253, 109, 'Density', '1.95', '2.95', '#ff8080');
  head(1147, 1253, 136, 'Neutron', '0.45', '-0.15', '#9fd09f');
  head(1253, 1413, 109, 'Vclay (GR)', '0', '1', '#85c285');
  head(1253, 1413, 136, 'Vclay (ND)', '0', '1', '#ffb0b0', 4);
  head(1413, 1573, 82, 'Vclay (GR)', '0', '1', '#85c285');
  head(1413, 1573, 109, 'Vclay (SP)', '0', '1', '#8484ff');
  head(1413, 1573, 136, 'Vclay (Nphi)', '0', '1', '#aaa', 4);
  head(1573, 1732, 136, 'Vclay (Final)', '0', '1', '#aaa', 4);
  root.querySelector('svg').innerHTML = s;
});

/* ---------- jobs ---------- */
define('jobs-bar', `
<style>
:host { display: flex; align-items: center; position: fixed; right: 0; bottom: 4px; width: 268px; height: 43px; box-sizing: border-box; padding: 0 12px 0 14px; background: #212121; color: #eee; box-shadow: 0 0 3px rgba(0,0,0,.4); }
b { flex: 1; }
button { border: 0; padding: 0; background: none; margin-left: 8px; }
svg { display: block; }
</style><b>Jobs</b><button aria-label="Minimize"><svg width="13" height="14"><path d="M0 4h13" stroke="#ddd" stroke-width="2"/></svg></button><button aria-label="Close"><svg width="14" height="14"><path d="M1 1l12 12M13 1L1 13" stroke="#ddd" stroke-width="2"/></svg></button>`);

/* ---------- application ---------- */
define('cpi-app', `
<style>
:host { display: flex; flex-direction: column; height: 100vh; box-sizing: border-box; border-bottom: 2px solid #999; }
main { display: flex; flex: 1; min-height: 0; }
section { display: flex; flex-direction: column; min-width: 0; min-height: 0; }
.left { flex: 0 0 528px; border-right: 2px solid #ccc; }
.top { flex: 557; } .bottom { flex: 443; border-top: 1px solid #bbb; }
.right { flex: 1; }
.sync { display: flex; align-items: center; gap: 6px; margin-right: 4px; }
.sync drop-down { width: 105px; --h: 20px; }
aside { flex: 0 0 19px; border-left: 2px solid #ccc; display: flex; flex-direction: column; align-items: flex-end; }
</style>
<app-header></app-header>
<main>
<side-menu></side-menu>
<section class="left">
<section class="top"><cpi-params></cpi-params></section>
<section class="bottom"><tab-strip tabs="Crossplot|Well List|Map" active="Map"><icon-button icon="gear"></icon-button><icon-button icon="menu"></icon-button></tab-strip><area-map></area-map></section>
</section>
<section class="right"><tab-strip tabs="Well Log|LAS|Cross Section" active="Well Log"><span class="sync"><span>Sync:</span><drop-down value="Auto (LEWIS" label="Sync"></drop-down></span><icon-button icon="gear"></icon-button><icon-button icon="menu"></icon-button></tab-strip><well-log></well-log></section>
<aside><icon-button icon="collapse"></icon-button></aside>
</main>
<jobs-bar></jobs-bar>`);
</script>
</body>
</html>
